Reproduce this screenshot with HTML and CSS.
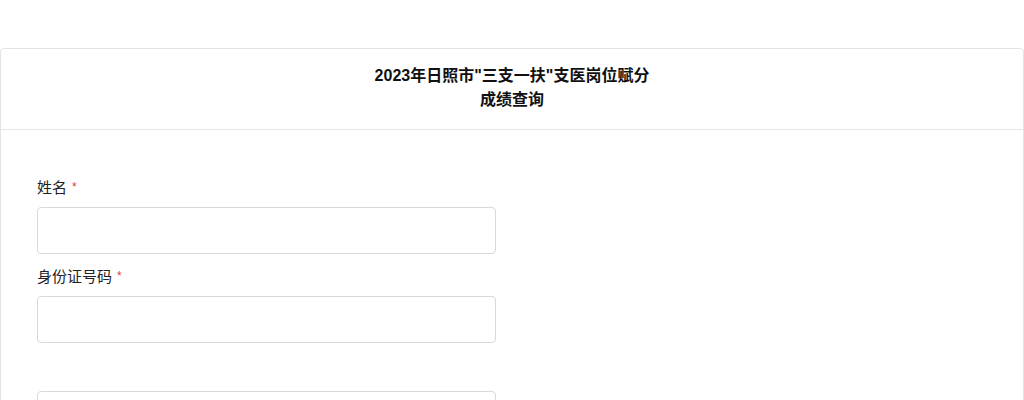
FILE: index.html
```html
<!DOCTYPE html>
<html lang="zh-CN">
<head>
<meta charset="utf-8">
<title>成绩查询</title>
<link rel="stylesheet" href="styles.css">
</head>
<body>
<div class="page">
  <div class="card">
    <div class="card-header">
      <div class="title">2023年日照市"三支一扶"支医岗位赋分<br>成绩查询</div>
    </div>
    <div class="card-body">
      <div class="form-item">
        <label class="label">姓名<span class="req">*</span></label>
        <input class="input" type="text">
      </div>
      <div class="form-item">
        <label class="label">身份证号码<span class="req">*</span></label>
        <input class="input" type="text">
      </div>
      <div class="form-item extra">
        <input class="input" type="text">
      </div>
    </div>
  </div>
</div>
</body>
</html>
```
FILE: styles.css
```css
html, body {
  margin: 0;
  padding: 0;
  background: #fff;
}
body {
  font-family: "Liberation Sans", "Noto Sans CJK SC", sans-serif;
  color: #1a1a1a;
}
.page {
  padding-top: 48px;
}
.card {
  border: 1px solid #e3e3e3;
  border-radius: 4px;
  width: 1022px;
}
.card-header {
  padding: 15px 0 17px;
  border-bottom: 1px solid #e6e6e6;
  text-align: center;
}
.title {
  font-size: 16px;
  font-weight: bold;
  line-height: 24px;
  color: #111;
}
.card-body {
  padding: 47px 36px 0;
}
.form-item {
  display: flex;
  flex-direction: column;
  align-items: flex-start;
  margin-bottom: 12px;
}
.form-item.extra {
  margin-top: 48px;
}
.label {
  display: block;
  height: 20px;
  font-size: 15px;
  line-height: 22px;
  color: #222;
  margin-bottom: 10px;
}
.req {
  color: #e0403c;
  font-size: 12px;
  line-height: 1;
  margin-left: 5px;
  position: relative;
  top: -2px;
}
.input {
  box-sizing: border-box;
  width: 459px;
  height: 47px;
  border: 1px solid #d9d9d9;
  border-radius: 4px;
  outline: none;
  background: #fff;
  padding: 0 10px;
  margin: 0;
}
```
